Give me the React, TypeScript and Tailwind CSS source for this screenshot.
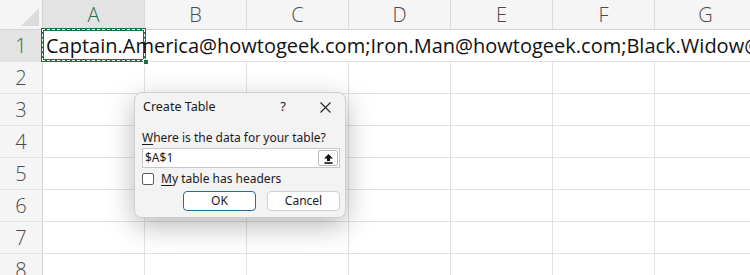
import React from "react";

const cols = ["A", "B", "C", "D", "E", "F", "G"];
const rows = [2, 3, 4, 5, 6, 7, 8];

function UploadIcon() {
  return (
    <svg width="11" height="11" viewBox="0 0 11 11">
      <path d="M5.5 1 L10 5.6 H7 V8 H4 V5.6 H1 Z" fill="#111" />
      <rect x="1.5" y="9.2" width="8" height="1.6" fill="#111" />
    </svg>
  );
}

export default function App() {
  return (
    <div
      className="relative w-[750px] h-[275px] overflow-hidden bg-white"
      style={{ fontFamily: "'Open Sans', 'Liberation Sans', sans-serif" }}
    >
      {/* header row */}
      <div className="flex h-[30px] bg-[#f5f5f5] border-b border-[#d4d4d4]">
        <div className="relative w-[43px] shrink-0 border-r border-[#d4d4d4]">
          <svg className="absolute right-[3px] bottom-[3px]" width="18" height="18" viewBox="0 0 18 18">
            <path d="M18 0 L18 18 L0 18 Z" fill="#dcdcdc" />
          </svg>
        </div>
        {cols.map((c, i) => (
          <div
            key={c}
            className={`w-[102px] shrink-0 flex items-center justify-center text-[20px] font-light border-r border-[#dadada] ${
              i === 0 ? "bg-[#e3e3e3] text-[#217346]" : "text-[#4a4a4a]"
            }`}
          >
            {c}
          </div>
        ))}
      </div>

      {/* row 1 */}
      <div className="flex h-[32px] border-b border-[#e1e1e1]">
        <div className="w-[43px] shrink-0 bg-[#e3e3e3] border-r border-[#d4d4d4] flex items-center justify-center text-[20px] font-light text-[#217346]">
          1
        </div>
        <div className="relative w-[102px] shrink-0">
          <div className="absolute left-[-2px] top-[-2px] w-[105px] h-[34px] border-[3px] border-[#1e6e42] z-10">
            <div className="absolute inset-[-2px] border-[1px] border-dashed border-white" />
          </div>
          <div className="absolute left-[3px] top-0 h-full flex items-center whitespace-nowrap text-[20px] text-[#111] z-20">
            Captain.America@howtogeek.com;Iron.Man@howtogeek.com;Black.Widow@howtogeek.com
          </div>
          <div className="absolute right-[-4px] bottom-[-4px] w-[6px] h-[6px] bg-[#1e6e42] border border-white z-30" />
        </div>
        <div className="flex-1" />
      </div>

      {/* other rows */}
      {rows.map((r) => (
        <div key={r} className="flex h-[32px] border-b border-[#e1e1e1]">
          <div className="w-[43px] shrink-0 bg-[#f5f5f5] border-r border-[#d4d4d4] flex items-center justify-center text-[20px] font-light text-[#4a4a4a]">
            {r}
          </div>
          {cols.map((c) => (
            <div key={c} className="w-[102px] shrink-0 border-r border-[#e1e1e1]" />
          ))}
        </div>
      ))}

      {/* dialog */}
      <div
        className="absolute left-[134px] top-[92px] w-[212px] h-[126px] rounded-[8px] bg-[#f3f3f3] border border-[#cfcfcf] shadow-[0_8px_28px_rgba(0,0,0,0.28)] z-40 text-[12px] text-[#1a1a1a]"
        style={{ fontFamily: "'Noto Sans', 'Open Sans', sans-serif" }}
      >
        <div className="flex items-center h-[28px] pl-[8px]">
          <span className="text-[12.5px]">Create Table</span>
          <span className="ml-auto mr-[34px] text-[13px]">?</span>
          <svg className="mr-[14px]" width="11" height="11" viewBox="0 0 11 11">
            <path d="M0.5 0.5 L10.5 10.5 M10.5 0.5 L0.5 10.5" stroke="#222" strokeWidth="1.1" />
          </svg>
        </div>
        <div className="pl-[7px] pr-[5px] pt-[9px]">
          <div className="leading-[16px]">
            <span className="underline underline-offset-2">W</span>here is the data for your table?
          </div>
          <div className="mt-[2px] flex items-center h-[20px] bg-white border border-[#c8c8c8]">
            <span className="pl-[2px] text-[12px]">$A$1</span>
            <div className="ml-auto mr-[1px] w-[20px] h-[16px] border border-[#bdbdbd] rounded-[2px] bg-white flex items-center justify-center">
              <UploadIcon />
            </div>
          </div>
          <div className="mt-[3px] flex items-center h-[16px]">
            <div className="w-[12px] h-[12px] rounded-[2px] border border-[#5c5c5c] bg-white" />
            <span className="ml-[7px]">
              <span className="underline underline-offset-2">M</span>y table has headers
            </span>
          </div>
          <div className="mt-[4px] flex justify-end gap-[11px]">
            <div className="w-[73px] h-[20px] rounded-[4px] bg-white border border-[#1f6f9a] flex items-center justify-center">
              OK
            </div>
            <div className="w-[73px] h-[20px] rounded-[4px] bg-white border border-[#d0d0d0] flex items-center justify-center">
              Cancel
            </div>
          </div>
        </div>
      </div>
    </div>
  );
}
